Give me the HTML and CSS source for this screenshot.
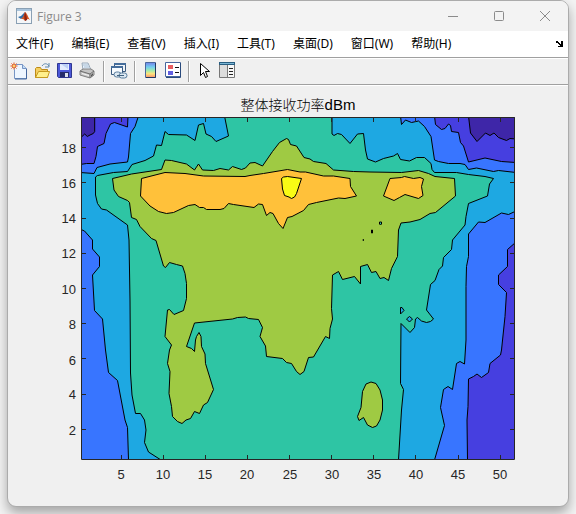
FILE: index.html
```html
<!DOCTYPE html>
<html lang="zh-CN">
<head>
<meta charset="utf-8">
<title>Figure 3</title>
<link rel="stylesheet" href="styles.css">
</head>
<body>
<main class="window">
  <header class="titlebar">
    <svg class="app-icon" viewBox="0 0 16 16" width="16" height="16" aria-hidden="true">
      <rect x=".5" y=".5" width="15" height="15" fill="#f4f6f8" stroke="#8aa0b4"/>
      <path d="M1 1h14v2H1z" fill="#a9c4dc"/>
      <path d="M2 9l3-1 4-4-1 5-3 2z" fill="#2d6ca8"/>
      <path d="M5 11l2-2 2-5c2 1 3 5 5 8-2-2-3-1-5 1-1-2-2-2-4-2z" fill="#d8531c"/>
      <path d="M9 4c-1 3-1 6 0 9l2-1c0-3-1-6-2-8z" fill="#8c2414"/>
    </svg>
    <span class="caption">Figure 3</span>
    <button class="caption-button" aria-label="最小化"><svg viewBox="0 0 12 12" width="12" height="12"><path d="M1 6.500h10"/></svg></button>
    <button class="caption-button" aria-label="最大化"><svg viewBox="0 0 12 12" width="12" height="12"><rect x="1.500" y="1.500" width="9" height="9" rx="1"/></svg></button>
    <button class="caption-button" aria-label="关闭"><svg viewBox="0 0 12 12" width="12" height="12"><path d="M1 1l10 10M11 1L1 11"/></svg></button>
  </header>

  <nav class="menubar">
    <button>文件(F)</button>
    <button>编辑(E)</button>
    <button>查看(V)</button>
    <button>插入(I)</button>
    <button>工具(T)</button>
    <button>桌面(D)</button>
    <button>窗口(W)</button>
    <button>帮助(H)</button>
    <button class="dock" aria-label="停靠"><svg viewBox="0 0 8 6" width="8" height="6"><path d="M0 0h2v1h1v1h1v1h1V0h2v6H2V5h2V4H3V3H2V2H0z" fill="#000"/></svg></button>
  </nav>

  <div class="toolbar">
    <button aria-label="新建"><svg viewBox="0 0 18 18" width="18" height="18">
      <path d="M4.500 2.500h8l4 4v10h-12z" fill="#eef6ff" stroke="#7795c4"/>
      <path d="M16.500 7v10H5" fill="none" stroke="#45689f"/>
      <path d="M12.500 2.500v4h4" fill="#c4dcf4" stroke="#7795c4"/>
      <path d="M1 1l6 6M7 1L1 7M4 0v8M0 4h8" stroke="#f0a080"/>
      <circle cx="4" cy="4" r="2" fill="#ffd070" stroke="#d95b32"/>
    </svg></button>
    <button aria-label="打开"><svg viewBox="0 0 18 18" width="18" height="18">
      <path d="M2.500 15.500v-9l1-1h4l1 2h6v8z" fill="#f5cf60" stroke="#bd8b18"/>
      <path d="M2.500 15.500l3-6h11l-2 6z" fill="#fff08c" stroke="#c69a20"/>
      <path d="M9 4c2-3 5-3 7 0M16 1v4h-4" fill="none" stroke="#5c86ad"/>
    </svg></button>
    <button aria-label="保存"><svg viewBox="0 0 18 18" width="18" height="18">
      <path d="M1.500 1.500h14v14h-13l-1-1z" fill="#4c58d8" stroke="#2f3790"/>
      <path d="M4 2h9v6H4z" fill="#e4edff"/><path d="M5 2h7v5z" fill="#bcd0f5"/>
      <path d="M4 10h9v5H4z" fill="#252b69"/><path d="M9 11h3v4H9z" fill="#dde2ed"/>
    </svg></button>
    <button aria-label="打印"><svg viewBox="0 0 18 18" width="18" height="18">
      <path d="M4 8L3 1h6l3 7z" fill="#e8f3ff" stroke="#9aaaba"/>
      <path d="M4 3h5M5 5h5" stroke="#a6bccf"/>
      <path d="M1 9l3-2 8 0 3 2v4l-4 3-10-3z" fill="#c4c4c4" stroke="#808080"/>
      <path d="M1 9l10 3 4-3M11 12v4" fill="none" stroke="#6c6c6c"/>
      <path d="M3 11l7 2v1l-7-2z" fill="#f5f5f5"/><path d="M12 13l2-2v2l-2 2z" fill="#555"/>
    </svg></button>
    <span class="separator"></span>
    <button aria-label="链接绘图"><svg viewBox="0 0 18 18" width="18" height="18">
      <path d="M4.500 1.500h11v8h-11z" fill="#eef3f8" stroke="#38597f"/><path d="M4 1h12v2H4z" fill="#456d9b"/>
      <path d="M1.500 4.500h11v8h-11z" fill="#f7fbff" stroke="#38597f"/><path d="M1 4h12v2H1z" fill="#456d9b"/>
      <rect x="4" y="10" width="7" height="5" rx="2.500" fill="#dce8f2" stroke="#597d9d"/>
      <rect x="9" y="11" width="8" height="5" rx="2.500" fill="#dce8f2" stroke="#597d9d"/>
      <path d="M7 13.500h7" stroke="#40617e"/>
    </svg></button>
    <span class="separator"></span>
    <button aria-label="插入颜色栏"><svg viewBox="0 0 18 18" width="18" height="18">
      <defs><linearGradient id="spectrum" x2="0" y2="1"><stop stop-color="#7380e8"/><stop offset=".3" stop-color="#72cdf0"/><stop offset=".55" stop-color="#a5edaa"/><stop offset=".75" stop-color="#ffe37b"/><stop offset="1" stop-color="#f59070"/></linearGradient></defs>
      <path d="M4.500 .5h10v15h-10z" fill="url(#spectrum)" stroke="#4a679d"/><path d="M14.500 1v14.500H5" fill="none" stroke="#20365e"/>
    </svg></button>
    <button aria-label="插入图例"><svg viewBox="0 0 18 18" width="18" height="18">
      <path d="M1.500 .5h15v14h-15z" fill="#fff" stroke="#46659d"/><path d="M16.500 1v14.500H2" fill="none" stroke="#294a7c"/>
      <path d="M4 3h5v4H4z" fill="#e85d60"/><path d="M4 9h5v4H4z" fill="#625fe0"/><path d="M11 5.500h4M11 10.500h4" stroke="#111"/>
    </svg></button>
    <span class="separator"></span>
    <button aria-label="编辑绘图"><svg viewBox="0 0 18 18" width="18" height="18">
      <path d="M5.500 1.500v12l3-3 2 5 2-1-2-5h4z" fill="#fff" stroke="#000"/>
    </svg></button>
    <button aria-label="属性检查器"><svg viewBox="0 0 18 18" width="18" height="18">
      <path d="M1.500 .5h15v15h-15z" fill="#f7f7f7" stroke="#777"/><path d="M1 0h16v3H1z" fill="#285d80"/><path d="M2 1h14v1H2z" fill="#79b5d4"/>
      <path d="M2 3h7v12H2z" fill="#dcdcdc"/><path d="M9.500 3v12" stroke="#777"/><path d="M11 6.500h4M11 9.500h4M11 12.500h4" stroke="#222"/>
    </svg></button>
  </div>

  <svg class="figure" viewBox="8 85 560 421" role="img" aria-label="整体接收功率dBm">
    <text class="plot-title" x="298" y="110"><tspan class="title-cjk">整体接收功率</tspan>dBm</text>
    <defs><clipPath id="axes"><path d="M81 117h434v342H81z"/></clipPath></defs>
    <g class="contours" clip-path="url(#axes)">
      <path class="sky" d="M80 116h436v344H80z"/>
      <!-- low-power corners -->
      <path class="blue" d="M80 116V172.500L94 173.500 97 167.500 110 164 127.500 162 128.500 157 130.500 133.500 135 126.500 138.500 116z"/>
      <path class="indigo" d="M80 116V164.500L86.500 163.500 94 163.500 96 156.500 97.500 146.500 104 143.500 106 133.500 110.500 124 114.500 122.500 127.500 127 128 116z"/>
      <path class="violet" d="M80 116V137L81.500 137 84.700 134 87.300 136.500 90 135 93.300 133.500 94.700 131.500V116z"/>
      <path class="blue" d="M400.500 116L401.500 124.500 405.500 120 411.500 122.500 418.500 121 424.500 126.500 431 136.500 434.500 160 438.500 161.500 448.500 163.500 460 163.500 465 164.500 468.500 169.500 476.500 168 493.500 171.500 498.500 170.500 516 172.500V116z"/>
      <path class="indigo" d="M434.500 116L435.500 124.500 441.500 129.500 445 128.500 448.500 124 450.500 125.500 451.500 131.500 458.500 132.500 460.500 142.500 463.500 146 468.500 162 485 158 501.500 161.500 516 162.500V116z"/>
      <path class="violet" d="M468.500 116L470.500 133 477 141.500 485.500 133 490 135.500 494 133 498.500 137.500 506.500 140.500 510 138.500 516 139V116z"/>
      <path class="blue" d="M80 229L84.500 231 92.500 240V249L99.500 257V266.500L92.500 275 94.500 310.500 102.500 319 105.500 350 108.500 372.500 117.500 380.500 125 420 127.500 427.500 128.500 460H80z"/>
      <path class="blue" d="M516 211L508.500 214.500 501.500 213 485 222.500 478.500 222 468.500 234V256.500L466.500 266.500 466 286.500V340L464.500 364 460 361.500 456.500 363.500 452.500 389.500 448 386.500 443.500 389.500 440.500 407.500 444.500 425.500 434.500 460H516z"/>
      <path class="indigo" d="M516 242L507.500 249.500V266.500L498.500 275V284.500L506.500 292.500 505 316.500 501.500 350 500.500 355 490 363.500 488.500 372.500 481.500 377.500 477 374 473.500 376.500 468.500 379 468 406.500 467 420 467.500 460H516z"/>
      <!-- mid levels -->
      <path class="teal" d="M161 460L148.500 452 144.500 442.500 146 430 144.500 420 140.500 413.500H135.500L132 395 130.500 373 130 300 129.500 270 129 240 127.500 225 106.500 210 101.500 209 97.500 203.500 95.500 195V177L97.500 175.500 113.500 172.500 127.500 171.500 132 164.500 145 160.500 153.500 156 156.500 145 161.500 145.500 165 131.500 168.500 134.500 186.500 135 195 140.500 198.500 125 203.500 123.500 206 134 211.500 136.500 216 141.500 228.500 136 224.500 116H332V134L334 135.500 337.500 133.500 341.500 134.500 350 143.500 357.500 134 363.500 133.500 365.500 150 367.500 159 375.500 162 383.500 158.500 393.500 156 397.500 153.500 400.500 159.500 409.500 161 416.500 157.500H424.500L431 163.500 432 169.500 434.500 172.500H456.500L468.500 174.500 485 176.500 493.500 178.500 489.500 184 487.500 196 468.500 203.500 466 216.500 465 225 452.500 240 451.500 249.500 443.500 257.500 442.500 266 439 269.500 435 280.500 430.500 284.500 426.500 310 433.500 319 430.500 321.500 426.500 322.500 421.500 321 417.500 317.500 415.500 319 414.500 327.500 410 332.500 401 323.500 400.500 383.500 403.500 389.500 401.500 410 398.500 460z"/>
      <path class="sky" d="M400.500 307.500H402L404 310.500 400.500 314z"/>
      <path class="sky" d="M409.500 316.500L412.500 319 409.500 322 406.500 319z"/>
      <path class="green" d="M112.500 178.500L131.500 174 161.500 169.500 165 160 171.500 160.500 186.500 164 194.500 170 198.500 164 202.500 170 213.500 170.500 220 168.500 228.500 170 232.500 166.500 241.500 169.500 245.500 168 250 163 255 162.500 262.500 166 272.500 151.500 279.500 142.500 286.500 138.500 288.500 139.500 290.500 144.500 296.500 146 304 157.500 310 159 313.500 161.500 326 163.500 333.500 170 353.500 171.500 370 172 401.500 172.500 418.500 170.500 428.500 173.500 435 176.500 454.500 178.500 455.500 196 435.500 212.500 430 213.500 420 219.500 410 222 401 223 398.500 230 397.500 256.500 391.500 268.500 388.500 280.500 384 277.500 380 278.500 376 271.500 371.500 272.500 367.500 264.500 360.500 266.500V284L354.500 276.500 342.500 279.500 338.500 271.500 332.500 275 331.500 308.500 332.500 319 330 328.500 329.500 338.500 325.500 336.500 313.500 357 308.500 357.500 304 371.500 300 374.500 296.500 371.500 291.500 363.500 286.500 362.500 282.500 358.500 266.500 356.500 265.500 346 260 336.500 262.500 327.500 258.500 319.500 248.500 318.500 245.500 317 237.500 317.500 232.500 319 194.500 323 186.500 346.500 191.500 348.500 194.500 351.500 195.500 340 196.500 336.500 199 332.500 201 336.500 201.500 346.500 205 354 205.500 363.500 213.500 389.500 207.500 402.500 203.500 405 199.500 413.500 194.500 411.500 190.500 418.500 186 420 182 423.500 177.500 421.500 172.500 416.500 171.500 406.500 169 393.500 170 371.500 167.500 363.500 169.500 350 171.500 345 165 336.500 167.500 310 169.500 309.500 174 314.500 183.500 310.500 186.500 298.500V283.500L185 273.500 182.500 266 176.500 264.500 169.500 262.500 165.500 267.500 163.500 266 156 240.500 151.500 238.500 140 226.500 136.500 219.500 131.500 217.500 129.500 202.500 127.500 200.500 118.500 196.500 114 190z"/>
      <path class="green" d="M371 382L376 383.500 380 390 382.500 400V410L380 420 376.500 426 372.500 427.500 367.500 425 363.500 417.500 359 420.500 357.500 416.500 361 407.500 362.500 391.500 366 384z"/>
      <path class="teal" d="M379.500 222l2 0v2l-1 1-1-1zM371.500 230h1l0 3h-1zM363 239.500h.5v1h-.5z"/>
      <!-- peak levels -->
      <path class="orange" d="M141.500 178.500L165 172.500 185 173.500 203.500 176 245 176.500 250 175.500 263.500 173.500 287.500 169.500 300 172 305.500 172 323.500 176 333.500 176 350 178.500 350.500 186.500 356.500 196 345 198.500 338.500 198 316.500 202.500 308.500 204.500 303.500 210.500 292 216.500 287.500 217.500 283 228.500 278.500 223.500 273 213.500 270 212.500 266.500 215.500 262.500 204.500 258.500 204 254 207.500 233.500 204.500 228.500 203.500 224 208.500 220 209.500 206.500 209.500 203.500 207.500 199.500 207.500 195 204.500 188.500 205.500 173.500 212.500 166.500 213.500 158.500 211.500 150 206 140.500 196z"/>
      <path class="orange" d="M390 178.500L401.500 177.500 404.500 176.500 413.500 178.500 420 177.500 423.500 179 421.500 186.500 423 195.500 418.500 198.500 405 194.500 399.500 197.500 394 200.500 383.500 196z"/>
      <path class="yellow" d="M281.500 178.500L283.500 177 287.500 176.500 301.500 178.500 296.500 193.500 294.500 197 291.500 198.500 289 197 284.500 195.500 282.500 189z"/>
    </g>
    <path class="axis" d="M81.500 117.500h433v342h-433z"/>
    <path class="axis" d="M121.500 459v-4M163.500 459v-4M205.500 459v-4M247.500 459v-4M289.500 459v-4M331.500 459v-4M373.500 459v-4M415.500 459v-4M458.500 459v-4M500.500 459v-4M121.500 118v4M163.500 118v4M205.500 118v4M247.500 118v4M289.500 118v4M331.500 118v4M373.500 118v4M415.500 118v4M458.500 118v4M500.500 118v4"/>
    <path class="axis" d="M82 429.500h4M82 394.500h4M82 358.500h4M82 323.500h4M82 288.500h4M82 253.500h4M82 218.500h4M82 182.500h4M82 147.500h4M514 429.500h-4M514 394.500h-4M514 358.500h-4M514 323.500h-4M514 288.500h-4M514 253.500h-4M514 218.500h-4M514 182.500h-4M514 147.500h-4"/>
    <g class="x-labels">
      <text x="121" y="479">5</text><text x="163" y="479">10</text><text x="205" y="479">15</text><text x="247" y="479">20</text><text x="290" y="479">25</text><text x="332" y="479">30</text><text x="374" y="479">35</text><text x="416" y="479">40</text><text x="458" y="479">45</text><text x="500" y="479">50</text>
    </g>
    <g class="y-labels">
      <text x="76" y="435">2</text><text x="76" y="399">4</text><text x="76" y="365">6</text><text x="76" y="329">8</text><text x="76" y="294">10</text><text x="76" y="258">12</text><text x="76" y="223">14</text><text x="76" y="188">16</text><text x="76" y="153">18</text>
    </g>
  </svg>
</main>
</body>
</html>
```

FILE: styles.css
```css
* { box-sizing: border-box; }

body {
  margin: 0;
  padding: 0 7px 7px;
  background: #f3f3f3;
  font-family: "Noto Sans", "Noto Sans CJK SC", sans-serif;
}

.window {
  overflow: hidden;
  border: 1px solid #ababab;
  border-radius: 9px;
  background: #f0f0f0;
  box-shadow: 0 6px 12px rgba(0, 0, 0, 0.32);
}

button {
  margin: 0;
  padding: 0;
  border: 0;
  background: none;
  color: inherit;
  font: inherit;
}

svg { display: block; }

.titlebar {
  display: flex;
  align-items: center;
  height: 30px;
  padding-left: 8px;
  background: #f3f3f3;
}

.caption {
  flex: 1;
  margin-left: 5px;
  color: #8b8b8b;
  font-family: "Open Sans", sans-serif;
  font-size: 12px;
}

.caption-button {
  display: grid;
  place-items: center;
  width: 46px;
  height: 29px;
}

.caption-button svg {
  fill: none;
  stroke: #8b8b8b;
}

.menubar {
  display: flex;
  align-items: center;
  gap: 18px;
  height: 26px;
  padding: 0 4px 0 8px;
  background: #fff;
  color: #000;
  font-size: 12px;
  line-height: 18px;
  white-space: nowrap;
}

.dock { margin-left: auto; }

.toolbar {
  display: flex;
  align-items: center;
  gap: 5px;
  height: 28px;
  padding: 0 2px;
  border-top: 1px solid #a0a0a0;
  border-bottom: 1px solid #a0a0a0;
  box-shadow: inset 0 1px #fff, 0 1px #fff;
}

.separator {
  width: 2px;
  height: 21px;
  margin-left: 1px;
  border-left: 1px solid #a0a0a0;
  border-right: 1px solid #fff;
}

.figure {
  width: 100%;
  height: auto;
  font-family: "Liberation Sans", "Noto Sans CJK SC", sans-serif;
}

.plot-title {
  fill: #000;
  font-size: 15px;
  text-anchor: middle;
}

.title-cjk {
  font-size: 14px;
  font-weight: 300;
}

.x-labels,
.y-labels {
  fill: #262626;
  font-size: 13px;
}

.x-labels { text-anchor: middle; }
.y-labels { text-anchor: end; }

.contours {
  stroke: #000;
  stroke-width: 1;
  stroke-linejoin: round;
}

.axis {
  fill: none;
  stroke: #262626;
}

.violet { fill: #3e26a8; }
.indigo { fill: #463fe0; }
.blue { fill: #3875ff; }
.sky { fill: #1ea8e2; }
.teal { fill: #2ec5a4; }
.green { fill: #9fca43; }
.orange { fill: #ffc13a; }
.yellow { fill: #f9fb15; }
```
